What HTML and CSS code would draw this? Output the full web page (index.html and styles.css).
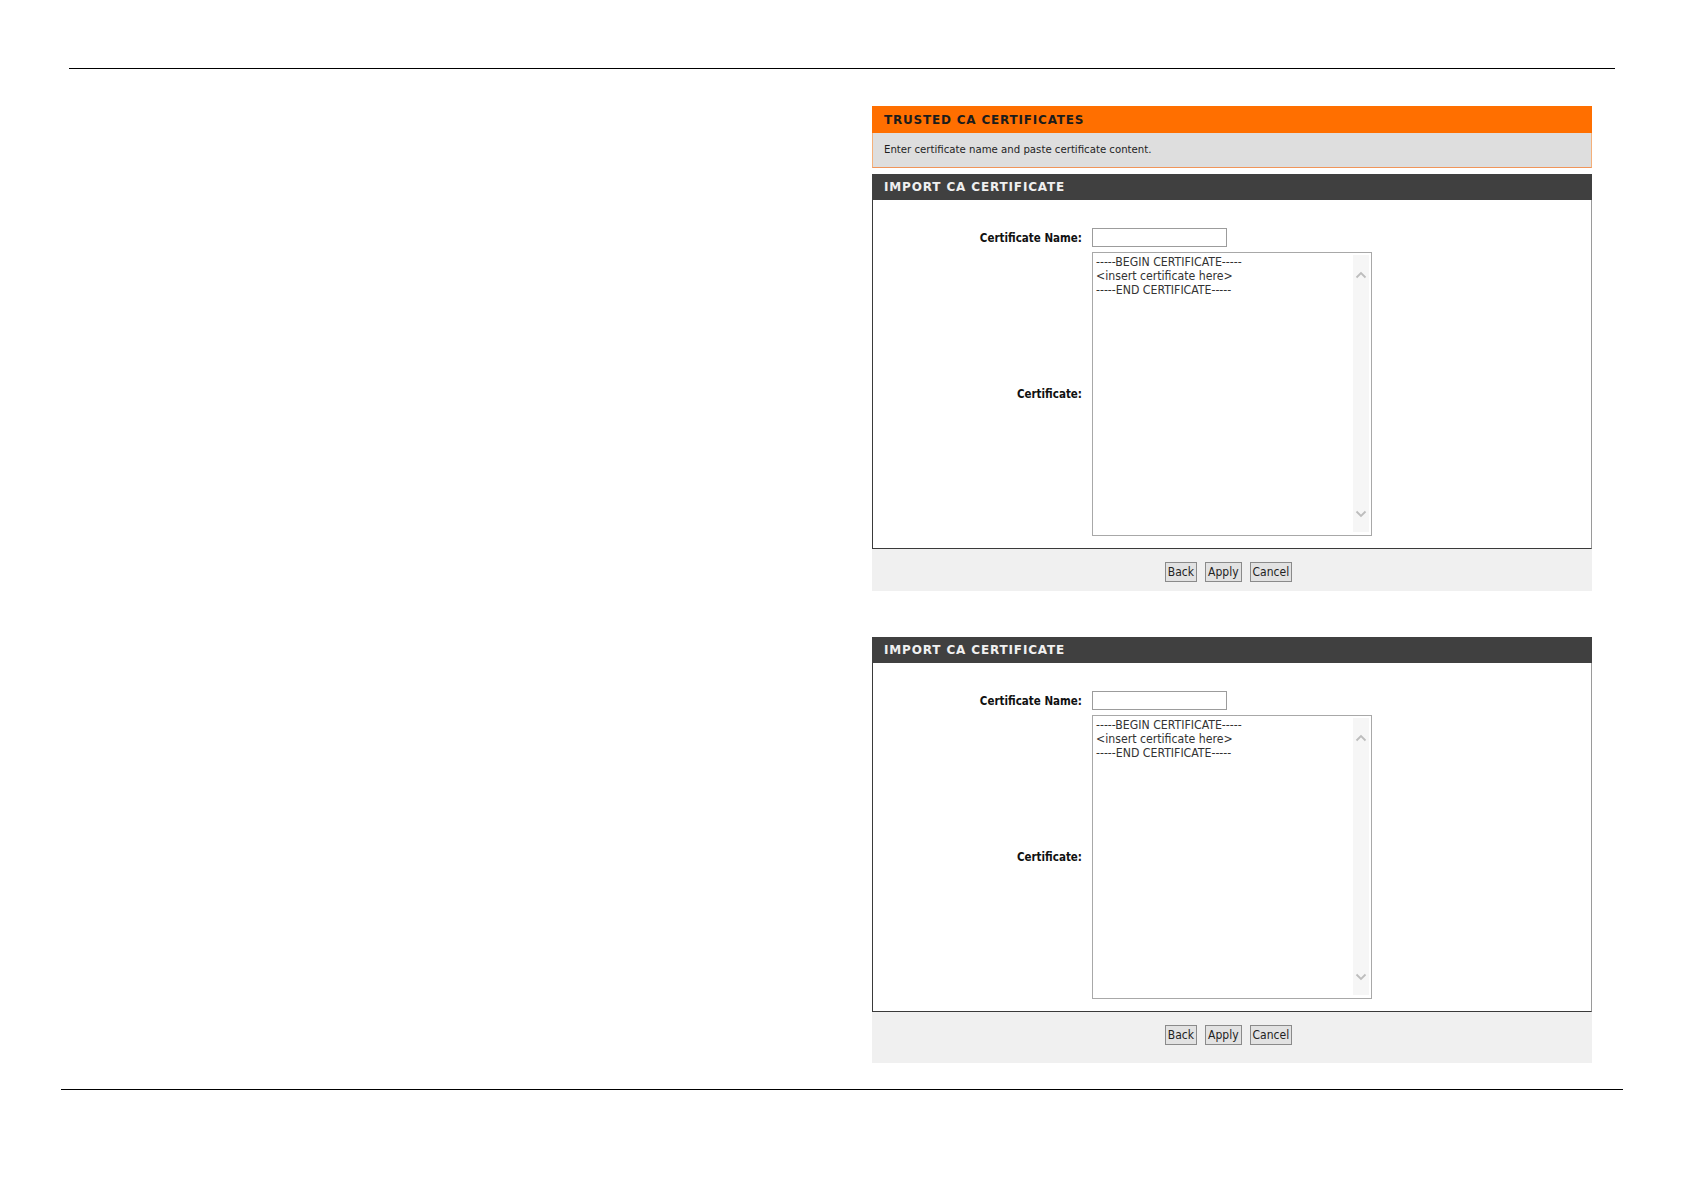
FILE: index.html
```html
<!DOCTYPE html>
<html>
<head>
<meta charset="utf-8">
<link rel="stylesheet" href="styles.css">
</head>
<body>
<div class="page">
  <div class="rule rule-top"></div>
  <div class="panels">
    <div class="notice">
      <div class="notice-title">TRUSTED CA CERTIFICATES</div>
      <div class="notice-text">Enter certificate name and paste certificate content.</div>
    </div>

    <div class="section first">
      <div class="section-title">IMPORT CA CERTIFICATE</div>
      <div class="section-body">
        <div class="row">
          <div class="label">Certificate Name:</div>
          <input class="name-input" type="text">
        </div>
        <div class="row row-cert">
          <div class="label">Certificate:</div>
          <div class="cert-box">
            <textarea class="cert-text">-----BEGIN CERTIFICATE-----
&lt;insert certificate here&gt;
-----END CERTIFICATE-----</textarea>
            <div class="scrollbar">
              <svg class="chev" width="12" height="8" viewBox="0 0 12 8"><path d="M1.5 6.5 L6 2 L10.5 6.5" fill="none" stroke="#bdbdbd" stroke-width="1.8"/></svg>
              <svg class="chev" width="12" height="8" viewBox="0 0 12 8"><path d="M1.5 1.5 L6 6 L10.5 1.5" fill="none" stroke="#bdbdbd" stroke-width="1.8"/></svg>
            </div>
          </div>
        </div>
      </div>
      <div class="section-foot">
        <button class="btn">Back</button>
        <button class="btn">Apply</button>
        <button class="btn">Cancel</button>
      </div>
    </div>

    <div class="section second">
      <div class="section-title">IMPORT CA CERTIFICATE</div>
      <div class="section-body">
        <div class="row">
          <div class="label">Certificate Name:</div>
          <input class="name-input" type="text">
        </div>
        <div class="row row-cert">
          <div class="label">Certificate:</div>
          <div class="cert-box">
            <textarea class="cert-text">-----BEGIN CERTIFICATE-----
&lt;insert certificate here&gt;
-----END CERTIFICATE-----</textarea>
            <div class="scrollbar">
              <svg class="chev" width="12" height="8" viewBox="0 0 12 8"><path d="M1.5 6.5 L6 2 L10.5 6.5" fill="none" stroke="#bdbdbd" stroke-width="1.8"/></svg>
              <svg class="chev" width="12" height="8" viewBox="0 0 12 8"><path d="M1.5 1.5 L6 6 L10.5 1.5" fill="none" stroke="#bdbdbd" stroke-width="1.8"/></svg>
            </div>
          </div>
        </div>
      </div>
      <div class="section-foot tall">
        <button class="btn">Back</button>
        <button class="btn">Apply</button>
        <button class="btn">Cancel</button>
      </div>
    </div>
  </div>
  <div class="rule rule-bottom"></div>
</div>
</body>
</html>
```

FILE: styles.css
```css
html, body {
  margin: 0;
  padding: 0;
  background: #ffffff;
}

.page {
  width: 1684px;
  height: 1191px;
  padding-top: 68px;
  box-sizing: border-box;
  font-family: "DejaVu Sans Condensed", "DejaVu Sans", sans-serif;
  color: #222;
}

.rule {
  height: 1px;
  background: #000;
}

.rule-top {
  margin-left: 69px;
  width: 1546px;
}

.rule-bottom {
  margin-left: 61px;
  width: 1562px;
  margin-top: 26px;
}

.panels {
  margin-left: 872px;
  width: 720px;
  margin-top: 37px;
}

/* Orange notice */
.notice {
  display: flex;
  flex-direction: column;
}

.notice-title {
  height: 27px;
  background: #ff6f00;
  color: #1c1c1c;
  font-family: "DejaVu Sans", sans-serif;
  font-weight: bold;
  font-size: 12px;
  letter-spacing: 0.8px;
  line-height: 28px;
  padding-left: 12px;
}

.notice-text {
  height: 34px;
  background: #dedede;
  border: 1px solid #f4b07a;
  border-top: none;
  border-bottom-color: #f0955a;
  font-size: 11.3px;
  line-height: 34px;
  padding-left: 11px;
  color: #1e1e1e;
}

/* Section */
.section.first {
  margin-top: 6px;
}

.section.second {
  margin-top: 46px;
}

.section-title {
  height: 26px;
  background: #404040;
  color: #f0f0f0;
  font-family: "DejaVu Sans", sans-serif;
  font-weight: bold;
  font-size: 12px;
  letter-spacing: 0.85px;
  line-height: 27px;
  padding-left: 12px;
}

.section-body {
  background: #fff;
  border-left: 1px solid #3a3a3a;
  border-right: 1px solid #9a9a9a;
  border-bottom: 1px solid #3a3a3a;
  padding-top: 28px;
  padding-bottom: 12px;
  display: flex;
  flex-direction: column;
  gap: 5px;
}

.row {
  display: flex;
  align-items: center;
}

.label {
  width: 219px;
  box-sizing: border-box;
  padding-right: 10px;
  text-align: right;
  font-weight: bold;
  font-size: 11.5px;
  color: #111;
}

.name-input {
  width: 135px;
  height: 19px;
  box-sizing: border-box;
  border: 1px solid #9c9c9c;
  margin: 0;
  padding: 0;
  background: #fff;
}

.cert-box {
  width: 280px;
  height: 284px;
  box-sizing: border-box;
  border: 1px solid #a8a8a8;
  display: flex;
  background: #fff;
}

.cert-text {
  flex: 1;
  border: none;
  outline: none;
  resize: none;
  overflow: hidden;
  margin: 0;
  padding: 2px 3px 1px;
  font-family: "DejaVu Sans Condensed", "DejaVu Sans", sans-serif;
  font-size: 12.2px;
  line-height: 14px;
  color: #333;
  background: transparent;
}

.scrollbar {
  width: 16px;
  margin: 2px 2px 3px 0;
  background: #f6f6f6;
  display: flex;
  flex-direction: column;
  justify-content: space-between;
  align-items: center;
  padding: 16px 0 14px;
}

.chev {
  display: block;
}

.section-foot {
  height: 42px;
  background: #f0f0f0;
  display: flex;
  justify-content: center;
  align-items: flex-start;
  padding-top: 13px;
  padding-right: 7px;
  box-sizing: border-box;
  gap: 8px;
}

.section-foot.tall {
  height: 51px;
}

.btn {
  height: 20px;
  margin: 0;
  padding: 0 2px;
  border: 1px solid #8a8a8a;
  background: #e2e2e2;
  font-family: "DejaVu Sans Condensed", "DejaVu Sans", sans-serif;
  font-size: 12px;
  color: #222;
  border-radius: 0;
}
```
